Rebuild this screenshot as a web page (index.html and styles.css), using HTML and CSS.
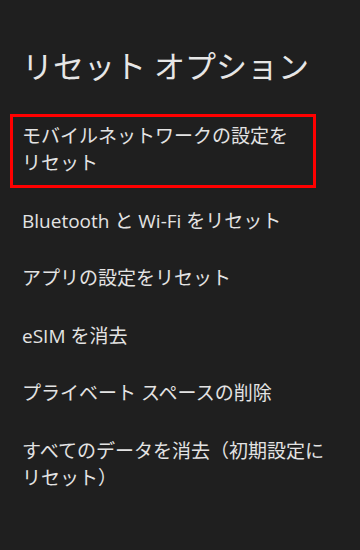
FILE: index.html
```html
<!DOCTYPE html>
<html lang="ja">
<head>
<meta charset="utf-8">
<meta name="viewport" content="width=device-width, initial-scale=1">
<title>リセット オプション</title>
<link rel="stylesheet" href="styles.css">
</head>
<body>
<main class="screen">
  <h1 class="title">リセット オプション</h1>
  <ul class="options">
    <li class="option option--marked">モバイルネットワークの設定を<span class="phrase">リセット</span></li>
    <li class="option">Bluetooth と Wi-Fi をリセット</li>
    <li class="option">アプリの設定をリセット</li>
    <li class="option">eSIM を消去</li>
    <li class="option">プライベート スペースの削除</li>
    <li class="option">すべてのデータを消去（初期設定に<span class="phrase">リセット）</span></li>
  </ul>
</main>
</body>
</html>
```
FILE: styles.css
```css
html, body {
  margin: 0;
  padding: 0;
  background: #1f1f1f;
}
body {
  font-family: "Open Sans", "Noto Sans CJK JP", "Noto Sans", sans-serif;
  color: #e3e3e3;
  width: 360px;
  height: 550px;
  overflow: hidden;
}
.screen {
  display: flex;
  flex-direction: column;
}
.title {
  margin: 0;
  padding: 46px 16px 0 22px;
  font-size: 31px;
  line-height: 40px;
  font-weight: 400;
  color: #e6e6e6;
}
.options {
  list-style: none;
  margin: 22px 0 0;
  padding: 0;
  display: flex;
  flex-direction: column;
}
.option {
  position: relative;
  padding: 15.25px 24px 15.25px 22px;
  font-size: 19px;
  line-height: 27px;
}
.phrase {
  white-space: nowrap;
}
.option--marked::after {
  content: "";
  position: absolute;
  left: 10px;
  top: 6px;
  width: 306px;
  height: 74px;
  box-sizing: border-box;
  border: 3.5px solid #ff0000;
}
```
